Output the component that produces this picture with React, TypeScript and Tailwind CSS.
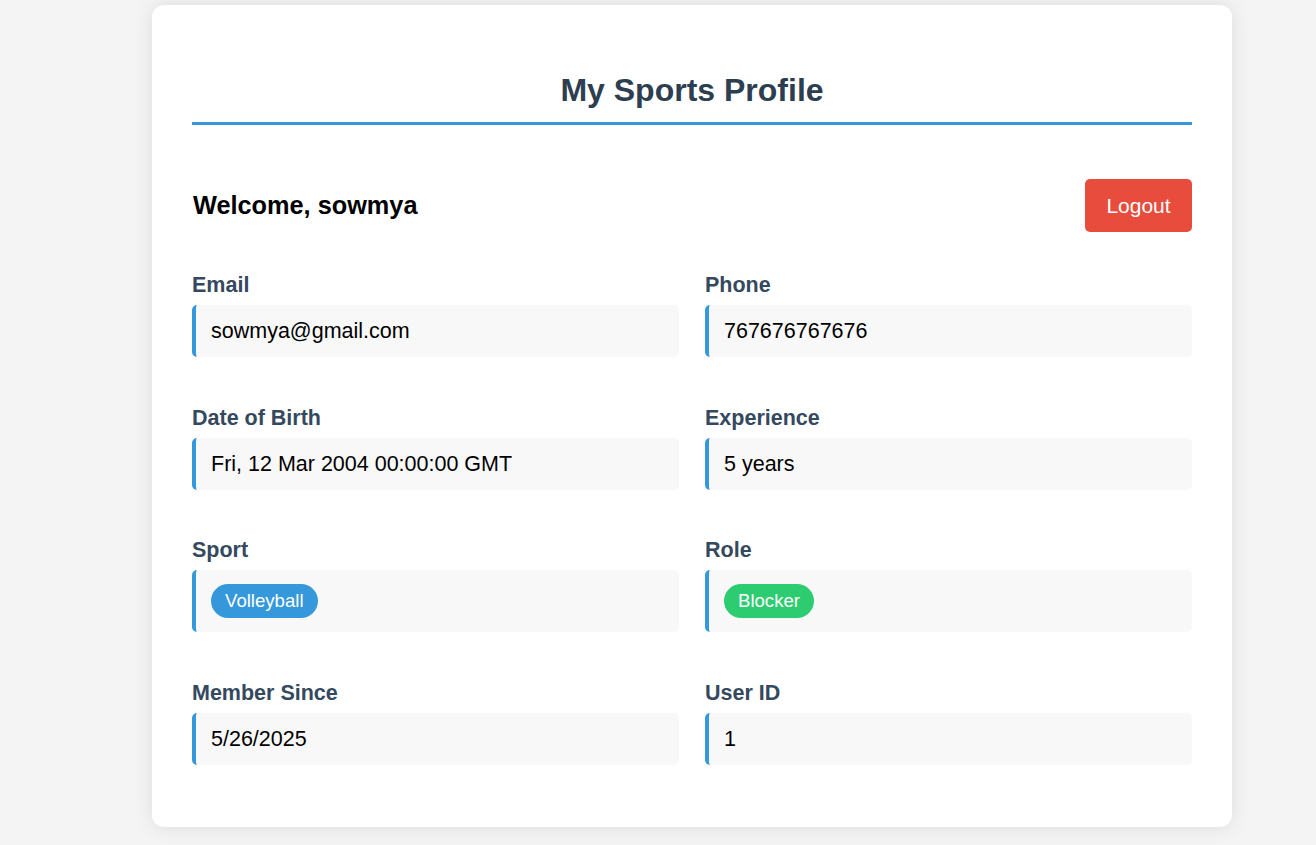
import React from "react";

type Field = { label: string; value: string; badge?: "blue" | "green" };

const fields: Field[] = [
  { label: "Email", value: "sowmya@gmail.com" },
  { label: "Phone", value: "767676767676" },
  { label: "Date of Birth", value: "Fri, 12 Mar 2004 00:00:00 GMT" },
  { label: "Experience", value: "5 years" },
  { label: "Sport", value: "Volleyball", badge: "blue" },
  { label: "Role", value: "Blocker", badge: "green" },
  { label: "Member Since", value: "5/26/2025" },
  { label: "User ID", value: "1" },
];

function FieldBox({ f }: { f: Field }) {
  return (
    <div className="flex flex-col">
      <div className="h-[25px] text-[21.5px] leading-[25px] font-bold text-[#34495e]">{f.label}</div>
      <div
        className={
          "mt-[7px] bg-[#f8f8f8] border-l-4 border-[#3498db] rounded-[5px] pl-[15px] flex items-center " +
          (f.badge ? "h-[62px]" : "h-[52px]")
        }
      >
        {f.badge ? (
          <span
            className={
              "inline-flex items-center h-[34px] px-[14px] rounded-full text-white text-[18.6px] " +
              (f.badge === "blue" ? "bg-[#3498db]" : "bg-[#2ecc71]")
            }
          >
            {f.value}
          </span>
        ) : (
          <span className="text-[21.5px] text-black">{f.value}</span>
        )}
      </div>
    </div>
  );
}

export default function App() {
  return (
    <div
      className="min-h-[845px] bg-[#f4f4f4] pt-[5px] pb-[18px]"
      style={{ fontFamily: '"Liberation Sans", Arial, sans-serif' }}
    >
      <div className="ml-[152px] w-[1080px] bg-white rounded-[12px] shadow-[0_0_20px_rgba(0,0,0,0.1)] px-[40px] pt-[40px] pb-[62px]">
        <div className="border-b-[3px] border-[#3498db] pt-[27px] pb-[13px]">
          <h1 className="text-center text-[32px] leading-[37px] font-bold text-[#2c3e50]">My Sports Profile</h1>
        </div>
        <div className="mt-[54px] flex items-center justify-between h-[53px]">
          <h2 className="text-[25.3px] font-bold text-black pl-[1px]">Welcome, sowmya</h2>
          <button className="h-[53px] w-[107px] rounded-[5px] bg-[#e74c3c] text-white text-[21px]">Logout</button>
        </div>
        <div className="mt-[41px] grid grid-cols-2 gap-x-[26px] gap-y-[48.67px]">
          {fields.map((f) => (
            <FieldBox key={f.label} f={f} />
          ))}
        </div>
      </div>
    </div>
  );
}
